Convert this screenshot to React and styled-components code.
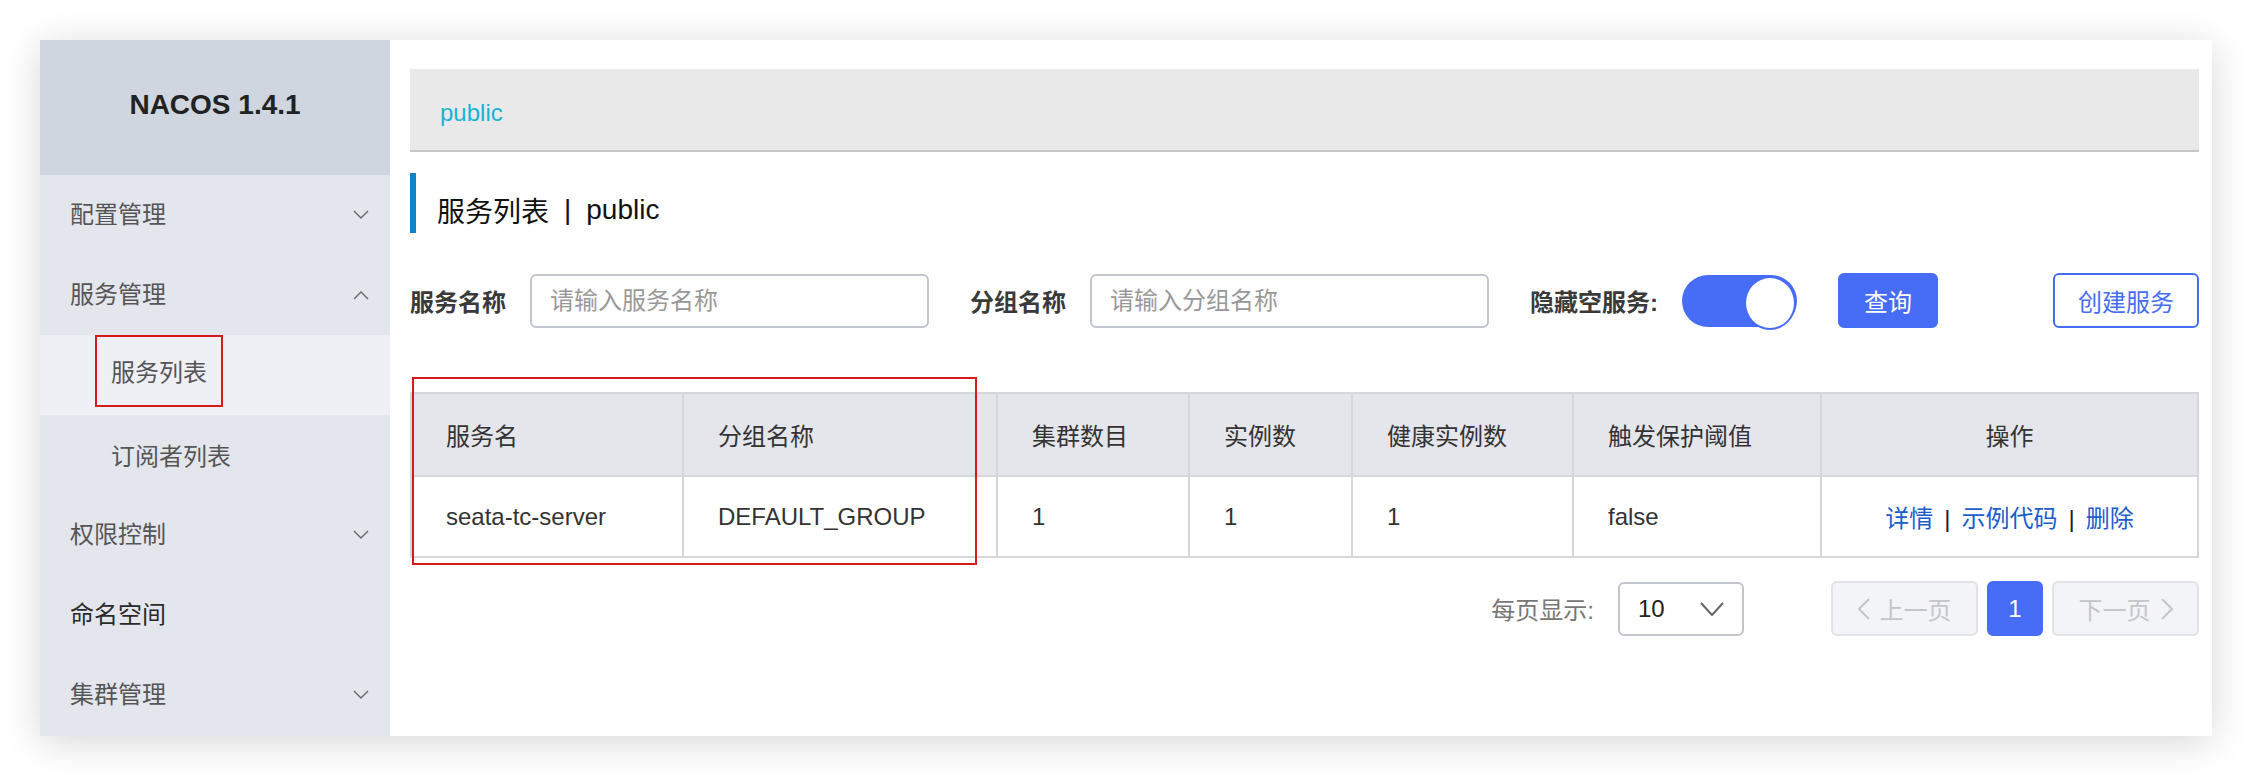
import React from 'react';
import styled, { createGlobalStyle } from 'styled-components';

const GlobalStyle = createGlobalStyle`
  html, body { margin: 0; padding: 0; background: #fff; }
  body {
    font-family: "Liberation Sans", "Noto Sans CJK SC", sans-serif;
    color: #333;
  }
  * { box-sizing: border-box; }
`;

const Page = styled.div`
  width: 2254px;
  height: 776px;
  padding: 40px 42px 40px 40px;
`;

const Window = styled.div`
  display: flex;
  width: 2172px;
  height: 696px;
  background: #fff;
  box-shadow: 0 6px 36px rgba(0, 0, 0, 0.16);
  overflow: hidden;
`;

// ---- sidebar
const Sidebar = styled.aside`
  width: 350px;
  flex-shrink: 0;
  background: #e3e7ed;
  display: flex;
  flex-direction: column;
`;

const Brand = styled.div`
  height: 135px;
  background: #cfd6df;
  display: flex;
  align-items: center;
  justify-content: center;
  padding-bottom: 6px;
  font-size: 28px;
  font-weight: bold;
  color: #222;
`;

const MenuItem = styled.div`
  height: 80px;
  display: flex;
  align-items: center;
  justify-content: space-between;
  padding: 0 21px 0 ${p => (p.$sub ? 55 : 30)}px;
  background: ${p => (p.$active ? '#eef0f5' : 'transparent')};
  font-size: 24px;
  line-height: 1;
  color: ${p => (p.$strong ? '#2a2a2a' : '#555')};
`;

const Label = styled.span`
  display: inline-flex;
  align-items: center;
  height: 72px;
  padding: 4px 14px 0;
  border: 2px solid ${p => (p.$marked ? '#d61a1a' : 'transparent')};
  margin-bottom: ${p => (p.$marked ? 8 : 0)}px;
`;

const Chevron = ({ up }) => (
  <svg width="16" height="10" viewBox="0 0 16 10">
    <polyline
      points={up ? '1,9 8,2 15,9' : '1,1 8,8 15,1'}
      fill="none"
      stroke="#666"
      strokeWidth="1.4"
    />
  </svg>
);

// ---- main
const Main = styled.main`
  flex: 1;
  display: flex;
  flex-direction: column;
  padding: 29px 15px 0 20px;
`;

const NsBar = styled.div`
  height: 83px;
  background: #e9e9e9;
  border-bottom: 2px solid #c6c6c6;
  display: flex;
  align-items: center;
  padding: 6px 0 0 30px;
  font-size: 24px;
  color: #1bb2d4;
`;

const Title = styled.h1`
  margin: 21px 0 0;
  height: 60px;
  border-left: 6px solid #1383c6;
  padding: 14px 0 0 21px;
  display: flex;
  align-items: center;
  font-size: 28px;
  font-weight: normal;
  color: #111;
`;

const TitleSep = styled.span`
  margin: 0 15px;
`;

const SearchBar = styled.div`
  margin-top: 40px;
  height: 55px;
  display: flex;
  align-items: center;
`;

const FieldLabel = styled.label`
  font-size: 24px;
  font-weight: bold;
  color: #3a3a3a;
  margin-right: 24px;
  white-space: nowrap;
`;

const TextInput = styled.input`
  width: 399px;
  height: 54px;
  border: 2px solid #c3c5cc;
  border-radius: 6px;
  padding: 0 18px;
  margin-right: 41px;
  font-family: inherit;
  font-size: 24px;
  color: #333;
  outline: none;
  &::placeholder { color: #999; }
`;

const Toggle = styled.span`
  position: relative;
  display: inline-block;
  width: 115px;
  height: 52px;
  border-radius: 26px;
  background: #476cf6;
  margin-right: 41px;
  &::after {
    content: '';
    position: absolute;
    right: 1px;
    top: 1px;
    width: 48px;
    height: 50px;
    border-radius: 50%;
    background: #fff;
    border: 2px solid #476cf6;
  }
`;

const Button = styled.button`
  height: 55px;
  padding: 0 ${p => (p.$outline ? 23 : 24)}px;
  border-radius: 6px;
  border: 2px solid #476cf6;
  background: ${p => (p.$outline ? '#fff' : '#476cf6')};
  color: ${p => (p.$outline ? '#476cf6' : '#fff')};
  font-family: inherit;
  font-size: 24px;
  margin-left: ${p => (p.$push ? 'auto' : '0')};
`;

// ---- table
const TableWrap = styled.div`
  position: relative;
  margin-top: 64px;
`;

const Table = styled.table`
  width: 100%;
  border-collapse: collapse;
  table-layout: fixed;
  font-size: 24px;
  color: #333;
`;

const Th = styled.th`
  height: 83px;
  padding: 0 0 0 ${p => (p.$center ? 0 : 34)}px;
  background: #e4e6eb;
  border: 2px solid #d5d7dd;
  font-weight: normal;
  text-align: ${p => (p.$center ? 'center' : 'left')};
`;

const Td = styled.td`
  height: 81px;
  padding: 0 0 0 ${p => (p.$center ? 0 : 34)}px;
  border: 2px solid #d5d7dd;
  text-align: ${p => (p.$center ? 'center' : 'left')};
`;

const Action = styled.a`
  color: #1a5dcc;
  text-decoration: none;
`;

const ActionSep = styled.span`
  margin: 0 11px;
  color: #222;
`;

const Annotation = styled.div`
  position: absolute;
  left: 2px;
  top: -15px;
  width: 565px;
  height: 188px;
  border: 2px solid #d61a1a;
  pointer-events: none;
`;

// ---- pager
const Pager = styled.div`
  margin-top: 23px;
  display: flex;
  align-items: center;
  justify-content: flex-end;
`;

const PagerLabel = styled.span`
  font-size: 24px;
  color: #777;
  margin-right: 24px;
`;

const Select = styled.div`
  width: 126px;
  height: 54px;
  border: 2px solid #c3c5cc;
  border-radius: 6px;
  display: flex;
  align-items: center;
  justify-content: space-between;
  padding: 0 18px;
  font-size: 24px;
  color: #222;
  margin-right: 78px;
`;

const PageBtn = styled.div`
  height: 55px;
  min-width: ${p => (p.$current ? 56 : 147)}px;
  border-radius: 6px;
  border: 2px solid ${p => (p.$current ? '#476cf6' : '#e1e3e9')};
  background: ${p => (p.$current ? '#476cf6' : '#f3f4f7')};
  color: ${p => (p.$current ? '#fff' : '#c3c5ca')};
  display: flex;
  align-items: center;
  justify-content: center;
  gap: 10px;
  font-size: 24px;
  margin-left: 9px;
`;

const Arrow = ({ dir, color = '#c3c5ca', w = 12, h = 22 }) => {
  const pts = {
    left: `${w - 1},1 1,${h / 2} ${w - 1},${h - 1}`,
    right: `1,1 ${w - 1},${h / 2} 1,${h - 1}`,
    down: `1,1 ${w / 2},${h - 1} ${w - 1},1`,
  }[dir];
  return (
    <svg width={w} height={h} viewBox={`0 0 ${w} ${h}`}>
      <polyline points={pts} fill="none" stroke={color} strokeWidth="2" />
    </svg>
  );
};

const columns = [
  { title: '服务名', width: 272 },
  { title: '分组名称', width: 314 },
  { title: '集群数目', width: 192 },
  { title: '实例数', width: 163 },
  { title: '健康实例数', width: 221 },
  { title: '触发保护阈值', width: 248 },
  { title: '操作', width: 377, center: true },
];

const rows = [
  { name: 'seata-tc-server', group: 'DEFAULT_GROUP', clusters: 1, instances: 1, healthy: 1, threshold: 'false' },
];

const App = () => {
  return (
    <Page>
      <GlobalStyle />
      <Window>
        <Sidebar>
          <Brand>NACOS 1.4.1</Brand>
          <MenuItem>配置管理<Chevron /></MenuItem>
          <MenuItem>服务管理<Chevron up /></MenuItem>
          <MenuItem $sub $active><Label $marked>服务列表</Label></MenuItem>
          <MenuItem $sub><Label>订阅者列表</Label></MenuItem>
          <MenuItem>权限控制<Chevron /></MenuItem>
          <MenuItem $strong>命名空间</MenuItem>
          <MenuItem>集群管理<Chevron /></MenuItem>
        </Sidebar>

        <Main>
          <NsBar>public</NsBar>
          <Title>服务列表<TitleSep>|</TitleSep>public</Title>

          <SearchBar>
            <FieldLabel>服务名称</FieldLabel>
            <TextInput placeholder="请输入服务名称" />
            <FieldLabel>分组名称</FieldLabel>
            <TextInput placeholder="请输入分组名称" />
            <FieldLabel>隐藏空服务:</FieldLabel>
            <Toggle />
            <Button>查询</Button>
            <Button $outline $push>创建服务</Button>
          </SearchBar>

          <TableWrap>
            <Table>
              <colgroup>
                {columns.map(c => <col key={c.title} style={{ width: c.width }} />)}
              </colgroup>
              <thead>
                <tr>
                  {columns.map(c => <Th key={c.title} $center={c.center}>{c.title}</Th>)}
                </tr>
              </thead>
              <tbody>
                {rows.map(r => (
                  <tr key={r.name}>
                    <Td>{r.name}</Td>
                    <Td>{r.group}</Td>
                    <Td>{r.clusters}</Td>
                    <Td>{r.instances}</Td>
                    <Td>{r.healthy}</Td>
                    <Td>{r.threshold}</Td>
                    <Td $center>
                      <Action>详情</Action>
                      <ActionSep>|</ActionSep>
                      <Action>示例代码</Action>
                      <ActionSep>|</ActionSep>
                      <Action>删除</Action>
                    </Td>
                  </tr>
                ))}
              </tbody>
            </Table>
            <Annotation />
          </TableWrap>

          <Pager>
            <PagerLabel>每页显示:</PagerLabel>
            <Select>10<Arrow dir="down" color="#666" w={24} h={14} /></Select>
            <PageBtn><Arrow dir="left" />上一页</PageBtn>
            <PageBtn $current>1</PageBtn>
            <PageBtn>下一页<Arrow dir="right" /></PageBtn>
          </Pager>
        </Main>
      </Window>
    </Page>
  );
};

export default App;
